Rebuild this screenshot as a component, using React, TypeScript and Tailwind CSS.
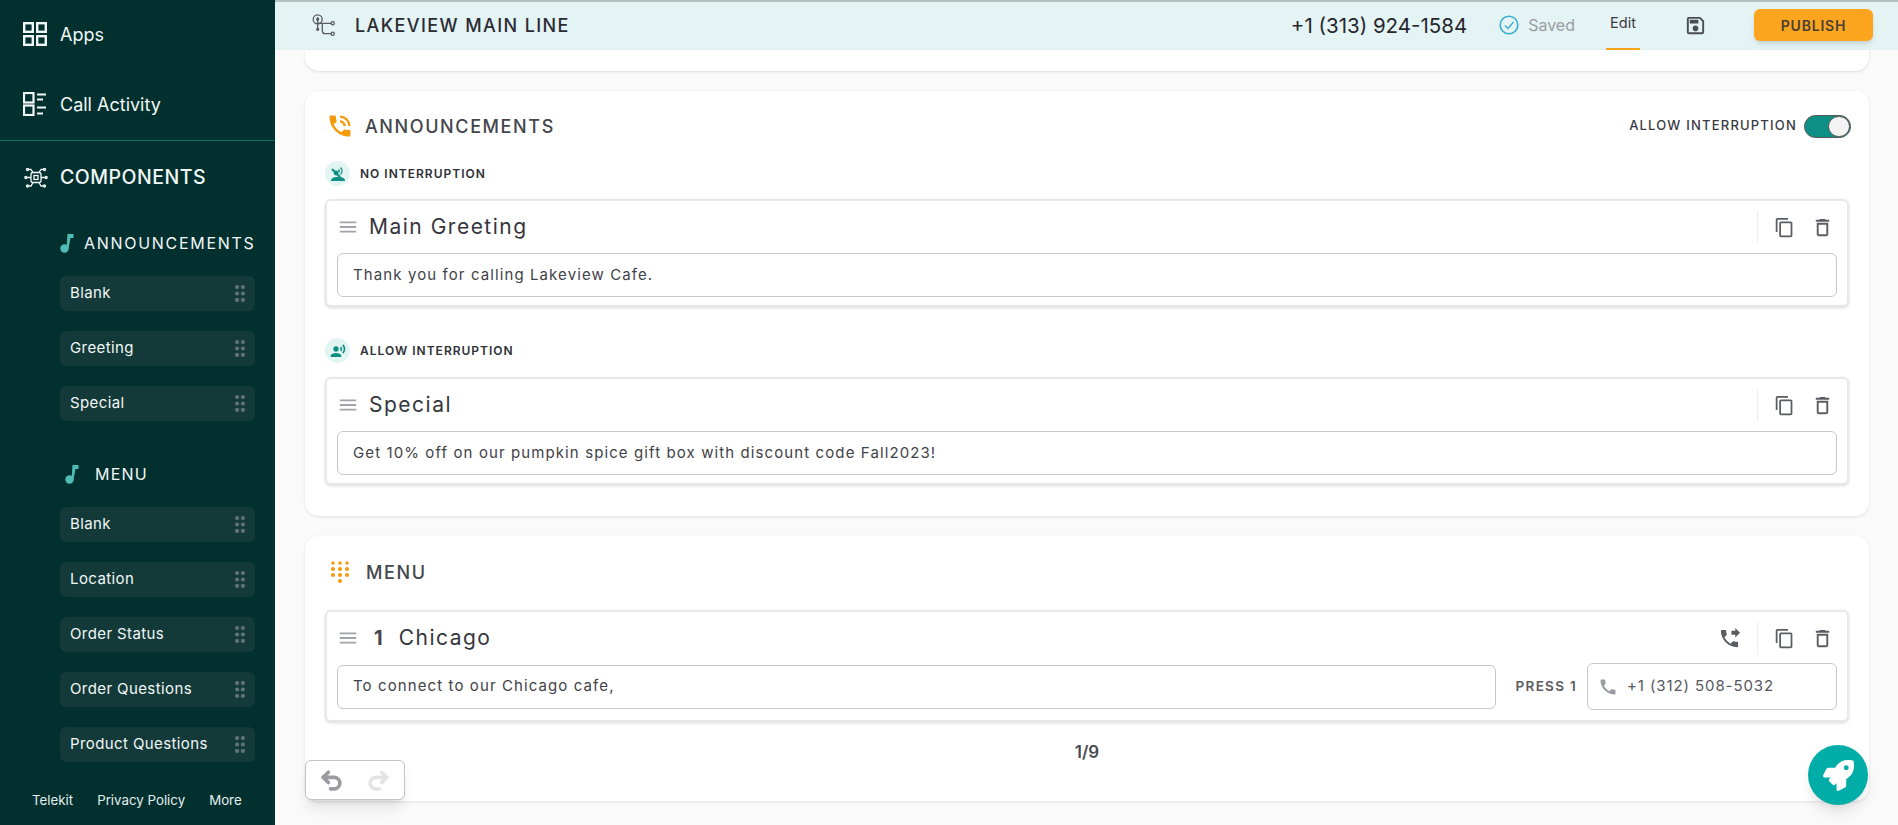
import { MdOutlineContentCopy, MdOutlineDelete, MdMenu, MdPhoneForwarded, MdCall, MdOutlineSave, MdPhoneInTalk, MdRecordVoiceOver } from "react-icons/md";
import { FaRocket } from "react-icons/fa";
import { Undo2, Redo2 } from "lucide-react";

const FONT = "font-['Inter','Noto_Sans',sans-serif]";

function AppsIcon() {
  return (
    <svg width="24" height="24" viewBox="0 0 24 24" fill="none" stroke="#f1f7f6" strokeWidth="2.4">
      <rect x="1.2" y="1.2" width="8.6" height="8.6" />
      <rect x="14.2" y="1.2" width="8.6" height="8.6" />
      <rect x="1.2" y="14.2" width="8.6" height="8.6" />
      <rect x="14.2" y="14.2" width="8.6" height="8.6" />
    </svg>
  );
}

function ActivityIcon() {
  return (
    <svg width="24" height="24" viewBox="0 0 24 24" fill="none" stroke="#f1f7f6" strokeWidth="2.2">
      <rect x="1" y="1" width="9.5" height="9.5" />
      <rect x="1" y="13.5" width="9.5" height="9.5" />
      <path d="M14 2.500h9M14 7.500h6M14 15.500h9M14 21.500h6" />
    </svg>
  );
}

function ComponentsIcon() {
  return (
    <svg width="24" height="20" viewBox="0 0 24 20" fill="none" stroke="#f1f7f6" strokeWidth="1.3">
      <rect x="7" y="4.500" width="10" height="10" rx="2" />
      <rect x="10" y="7.500" width="4" height="4" />
      <path d="M9 4.500 7 1.500H5M15 4.500 17 1.500H19M9 14.500 7 18H5M15 14.500 17 18H19M7 9.500H3M17 9.500H21" />
      <circle cx="3.500" cy="1.500" r="1" />
      <circle cx="20.500" cy="1.500" r="1" />
      <circle cx="3.500" cy="18" r="1" />
      <circle cx="20.500" cy="18" r="1" />
      <circle cx="1.800" cy="9.500" r="1" />
      <circle cx="22.200" cy="9.500" r="1" />
    </svg>
  );
}

function NoteIcon() {
  return (
    <svg width="14" height="20" viewBox="0 0 14 20" fill="#4fbdb6">
      <ellipse cx="4.500" cy="15.500" rx="4.200" ry="4.200" />
      <path d="M6.500 15.500 7.500 1H13.500V5H10.500L8.500 15.500Z" />
    </svg>
  );
}

function GripDots() {
  return (
    <svg width="10" height="17" viewBox="0 0 10 17" fill="#5d7473">
      {[2.100, 8.500, 14.900].map(y => (
        <g key={y}>
          <circle cx="2.100" cy={y} r="2.100" />
          <circle cx="7.900" cy={y} r="2.100" />
        </g>
      ))}
    </svg>
  );
}

function FlowIcon() {
  return (
    <svg width="24" height="24" viewBox="0 0 24 24" fill="none" stroke="#555b5e" strokeWidth="1.300">
      <circle cx="5.700" cy="6.300" r="4.500" />
      <path d="M5.700 4V16.300M5.700 10.300H19.200M10.300 10.300V17.700a3 3 0 0 0 3 3H19.200" />
      <circle cx="5.700" cy="6.300" r="1" fill="#555b5e" />
      <circle cx="5.700" cy="16.300" r="1" fill="#555b5e" />
      <circle cx="20.700" cy="10.300" r="1.600" />
      <circle cx="20.700" cy="20.700" r="1.600" />
    </svg>
  );
}

function KeypadIcon() {
  const rows = [2, 8, 14];
  return (
    <svg width="18" height="22" viewBox="0 0 18 22" fill="#f59a0c">
      {rows.map(y => [2, 9, 16].map(x => <circle key={`${x}-${y}`} cx={x} cy={y} r={y === 2 ? 1.700 : 2} />))}
      <circle cx="9" cy="20" r="2" />
    </svg>
  );
}

function MutedVoiceIcon() {
  return (
    <svg width="16" height="16" viewBox="0 0 16 16" fill="#0e8f85">
      <path d="M1 15c0-2.500 2-4 7-4s7 1.500 7 4Z" />
      <path d="M1 3.500l2-1 8 8-2 1Z" />
      <circle cx="6" cy="7" r="2.400" />
      <path d="M10.500 1.500c2 2 2 5 0 7" fill="none" stroke="#0e8f85" strokeWidth="1.300" />
      <path d="M8.500 3.500c1 1 1 2 0 3" fill="none" stroke="#0e8f85" strokeWidth="1.300" />
    </svg>
  );
}

function CheckCircle() {
  return (
    <svg width="20" height="20" viewBox="0 0 20 20" fill="none" stroke="#36aed0" strokeWidth="1.600">
      <circle cx="10" cy="10" r="8.800" />
      <path d="M6 10.500l3 3 5.500-6.500" strokeWidth="1.300" />
    </svg>
  );
}

function SideItem({ label }: { label: string }) {
  return (
    <div className="flex h-[35px] w-[195px] items-center justify-between rounded-md bg-[#133a39] pl-[10px] pr-[10px]">
      <span className="text-[15px] tracking-[0.4px] text-[#f1f7f6]">{label}</span>
      <GripDots />
    </div>
  );
}

function Sidebar() {
  const announcements = ["Blank", "Greeting", "Special"];
  const menu = ["Blank", "Location", "Order Status", "Order Questions", "Product Questions"];
  return (
    <aside className="flex h-full w-[275px] shrink-0 flex-col overflow-hidden bg-[#01302f] text-[#f1f7f6]">
      <div className="flex h-[68px] items-center gap-[13px] pl-[23px]">
        <AppsIcon />
        <span className="text-[18px]">Apps</span>
      </div>
      <div className="flex h-[72px] items-center gap-[13px] pl-[23px]">
        <ActivityIcon />
        <span className="text-[18px]">Call Activity</span>
      </div>
      <div className="h-px bg-[#0b6e69]" />
      <div className="mt-[21px] flex h-[32px] items-center gap-[12px] pl-[24px]">
        <ComponentsIcon />
        <span className="text-[19.500px] font-medium tracking-[0.5px]">COMPONENTS</span>
      </div>
      <div className="mt-[39px] flex h-[20px] items-center gap-[10px] pl-[60px]">
        <NoteIcon />
        <span className="text-[16px] tracking-[1.700px]">ANNOUNCEMENTS</span>
      </div>
      <div className="mt-[23px] flex flex-col gap-[20px] pl-[60px]">
        {announcements.map(a => <SideItem key={a} label={a} />)}
      </div>
      <div className="mt-[43px] flex h-[20px] items-center gap-[16px] pl-[65px]">
        <NoteIcon />
        <span className="text-[16px] tracking-[1.200px]">MENU</span>
      </div>
      <div className="mt-[23px] flex flex-col gap-[20px] pl-[60px]">
        {menu.map(a => <SideItem key={a} label={a} />)}
      </div>
      <div className="mt-[29px] flex items-center gap-[24px] pl-[32px] text-[13.300px] text-[#e4eeed]">
        <span>Telekit</span>
        <span>Privacy Policy</span>
        <span>More</span>
      </div>
    </aside>
  );
}

function TopBar() {
  return (
    <header className="flex h-[50px] shrink-0 items-center border-t-2 border-[#b4c2c2] bg-[#e4f3f3] pl-[37px]">
      <span className="mb-[2px]"><FlowIcon /></span>
      <span className="mb-[2px] ml-[19px] text-[18px] font-medium tracking-[1.400px] text-[#2b2b33]">LAKEVIEW MAIN LINE</span>
      <span className="ml-auto text-[20.500px] text-[#26262c]">+1 (313) 924-1584</span>
      <span className="mb-[2px] ml-[32px]"><CheckCircle /></span>
      <span className="mb-[2px] ml-[9px] text-[16px] text-[#9a9ea3]">Saved</span>
      <div className="ml-[31px] flex h-[48px] w-[34px] items-center justify-center border-b-2 border-[#fba51e] pb-[4px] text-[14.500px] text-[#3a3a42]">Edit</div>
      <span className="mb-[2px] ml-[44px] text-[#4a4d52]"><MdOutlineSave size={23} /></span>
      <button className="mb-[2px] ml-[47px] mr-[25px] flex h-[32px] w-[119px] items-center justify-center rounded-md bg-[#fda51e] text-[14px] font-semibold tracking-[0.8px] text-[#4a3f35] shadow-md">PUBLISH</button>
    </header>
  );
}

function TextBox({ text, className }: { text: string; className?: string }) {
  return (
    <div className={`flex h-[44px] items-center rounded-md border border-[#c8c8cc] bg-white pl-[15px] text-[15px] tracking-[1.100px] text-[#3f4247] ${className ?? ""}`}>
      {text}
    </div>
  );
}

function CardHeader({ title, number, forward }: { title: string; number?: string; forward?: boolean }) {
  return (
    <div className="flex h-[52px] items-center pl-[10px] pr-[13px]">
      <MdMenu size={22} className="text-[#a2a4aa]" />
      {number && <span className="ml-[15px] text-[20px] font-bold text-[#44464b]">{number}</span>}
      <span className={`${number ? "ml-[16px]" : "ml-[10px]"} text-[21px] tracking-[1.500px] text-[#34363c]`}>{title}</span>
      <div className="ml-auto flex items-center text-[#5b5d62]">
        {forward && <MdPhoneForwarded size={23} />}
        <div className={`h-[32px] w-px bg-[#eeeeee] ${forward ? "ml-[16px]" : ""}`} />
        <MdOutlineContentCopy size={21} className="ml-[16px]" />
        <MdOutlineDelete size={23} className="ml-[16px]" />
      </div>
    </div>
  );
}

function SectionLabel({ label, icon }: { label: string; icon: React.ReactNode }) {
  return (
    <div className="flex h-[25px] items-center gap-[10px]">
      <span className="flex h-[25px] w-[25px] items-center justify-center rounded-full bg-[#e2f5f3]">{icon}</span>
      <span className="text-[12px] font-semibold tracking-[1px] text-[#2e3036]">{label}</span>
    </div>
  );
}

function Main() {
  return (
    <main className="relative flex min-w-0 flex-1 flex-col overflow-hidden bg-[#fafafa]">
      <TopBar />
      <div className="flex flex-col pl-[30px] pr-[29px]">
        <div className="h-[21px] rounded-b-[14px] bg-white shadow-[0_1px_3px_rgba(0,0,0,0.12)]" />

        <section className="mt-[20px] h-[425px] rounded-[14px] bg-white px-[20px] pt-[20px] shadow-[0_1px_3px_rgba(0,0,0,0.1)]">
          <div className="flex h-[30px] items-center">
            <MdPhoneInTalk size={28} className="ml-[1px] text-[#f59a0c]" />
            <span className="ml-[11px] text-[18px] font-medium tracking-[1.600px] text-[#44464b]">ANNOUNCEMENTS</span>
            <span className="ml-auto text-[13px] font-medium tracking-[1.200px] text-[#3a3a42]">ALLOW INTERRUPTION</span>
            <div className="ml-[7px] -mr-[2px] flex h-[23px] w-[47px] justify-end rounded-full border border-[#555] bg-[#0e8f85]">
              <div className="h-[21px] w-[22px] rounded-full border border-[#555] bg-[#f3f3f3]" />
            </div>
          </div>
          <div className="mt-[20px]">
            <SectionLabel label="NO INTERRUPTION" icon={<MutedVoiceIcon />} />
          </div>
          <div className="mt-[13px] h-[108px] rounded-md border-2 border-[#e8e8e8] bg-white shadow-[0_1px_3px_rgba(0,0,0,0.15)]">
            <CardHeader title="Main Greeting" />
            <TextBox text="Thank you for calling Lakeview Cafe." className="mx-[10px]" />
          </div>
          <div className="mt-[31px]">
            <SectionLabel label="ALLOW INTERRUPTION" icon={<MdRecordVoiceOver size={16} className="text-[#0e8f85]" />} />
          </div>
          <div className="mt-[14px] h-[108px] rounded-md border-2 border-[#e8e8e8] bg-white shadow-[0_1px_3px_rgba(0,0,0,0.15)]">
            <CardHeader title="Special" />
            <TextBox text="Get 10% off on our pumpkin spice gift box with discount code Fall2023!" className="mx-[10px]" />
          </div>
        </section>

        <section className="mt-[20px] h-[265px] rounded-[14px] bg-white px-[20px] pt-[21px] shadow-[0_1px_3px_rgba(0,0,0,0.1)]">
          <div className="flex h-[30px] items-center">
            <span className="ml-[6px]"><KeypadIcon /></span>
            <span className="ml-[17px] text-[18px] font-medium tracking-[1.600px] text-[#44464b]">MENU</span>
          </div>
          <div className="mt-[23px] h-[112px] rounded-md border-2 border-[#e8e8e8] bg-white shadow-[0_1px_3px_rgba(0,0,0,0.15)]">
            <CardHeader title="Chicago" number="1" forward />
            <div className="mx-[10px] -mt-[1px] flex items-center">
              <TextBox text="To connect to our Chicago cafe," className="flex-1" />
              <span className="ml-[20px] mr-[10px] text-[13.500px] font-semibold tracking-[1.300px] text-[#5a5c62]">PRESS 1</span>
              <div className="flex h-[47px] w-[250px] items-center rounded-md border border-[#c8c8cc] pl-[10px] text-[15px] tracking-[0.9px] text-[#55575d]">
                <MdCall size={20} className="text-[#9a9ca2]" />
                <span className="ml-[9px]">+1 (312) 508-5032</span>
              </div>
            </div>
          </div>
          <div className="mt-[18px] text-center text-[17px] font-semibold text-[#4a4c52]">1/9</div>
        </section>
      </div>

      <div className="absolute left-[30px] top-[760px] flex h-[40px] w-[100px] items-center gap-[22px] rounded-md border border-[#c4c4c8] bg-white pl-[13px] shadow-lg">
        <Undo2 size={25} strokeWidth={3.5} className="text-[#9a9ca2]" />
        <Redo2 size={25} strokeWidth={3.5} className="text-[#e4e4e6]" />
      </div>
      <div className="absolute left-[1533px] top-[745px] flex h-[60px] w-[60px] items-center justify-center rounded-full bg-[#00ada7] shadow-lg">
        <FaRocket size={31} className="text-white" />
      </div>
    </main>
  );
}

export default function App() {
  return (
    <div className={`flex h-[825px] w-[1898px] overflow-hidden ${FONT}`}>
      <Sidebar />
      <Main />
    </div>
  );
}
